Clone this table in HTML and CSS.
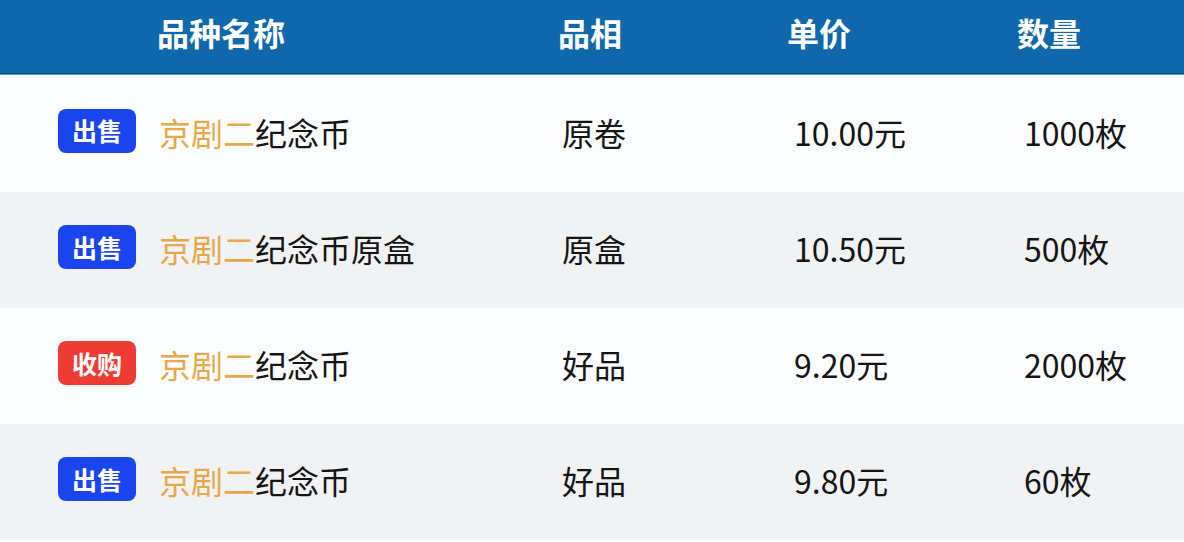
FILE: index.html
```html
<!DOCTYPE html>
<html lang="zh-CN">
<head>
<meta charset="utf-8">
<link rel="stylesheet" href="styles.css">
</head>
<body>
<div class="table">
  <div class="head">
    <div class="h h-name">品种名称</div>
    <div class="h">品相</div>
    <div class="h">单价</div>
    <div class="h">数量</div>
  </div>
  <div class="row odd first">
    <div class="cell name"><span class="badge sell">出售</span><span class="hl">京剧二</span>纪念币</div>
    <div class="cell">原卷</div>
    <div class="cell">10.00元</div>
    <div class="cell">1000枚</div>
  </div>
  <div class="row even">
    <div class="cell name"><span class="badge sell">出售</span><span class="hl">京剧二</span>纪念币原盒</div>
    <div class="cell">原盒</div>
    <div class="cell">10.50元</div>
    <div class="cell">500枚</div>
  </div>
  <div class="row odd">
    <div class="cell name"><span class="badge buy">收购</span><span class="hl">京剧二</span>纪念币</div>
    <div class="cell">好品</div>
    <div class="cell">9.20元</div>
    <div class="cell">2000枚</div>
  </div>
  <div class="row even">
    <div class="cell name"><span class="badge sell">出售</span><span class="hl">京剧二</span>纪念币</div>
    <div class="cell">好品</div>
    <div class="cell">9.80元</div>
    <div class="cell">60枚</div>
  </div>
</div>
</body>
</html>
```
FILE: styles.css
```css
html, body {
  margin: 0;
  padding: 0;
  background: #fcfdff;
}
body {
  font-family: "Noto Sans CJK SC", "Noto Sans", sans-serif;
  width: 1184px;
  height: 542px;
  overflow: hidden;
}
.table {
  display: flex;
  flex-direction: column;
}
.head {
  height: 74px;
  box-sizing: border-box;
  background: #1068ac;
  border-bottom: 1px solid #0d4f86;
  box-shadow: 0 1px 0 #4f9bd6;
  display: grid;
  grid-template-columns: 558px 229px 230px 1fr;
  align-items: center;
  padding-bottom: 10px;
}
.h {
  color: #ffffff;
  font-size: 32px;
  font-weight: 700;
  line-height: 1;
}
.h-name {
  padding-left: 157px;
}
.row {
  height: 116px;
  box-sizing: border-box;
  padding-bottom: 4px;
  display: grid;
  grid-template-columns: 562px 232px 230px 1fr;
  align-items: center;
  color: #141414;
  font-size: 32px;
  line-height: 1;
}
.row.first {
  margin-top: 1px;
  height: 117px;
}
.row.odd { background: #fcfdff; }
.row.even { background: #f1f2f4; }
.name {
  display: flex;
  align-items: center;
  padding-left: 58px;
}
.hl {
  color: #e8a84a;
}
.badge {
  display: inline-flex;
  align-items: center;
  justify-content: center;
  width: 78px;
  height: 44px;
  border-radius: 8px;
  color: #ffffff;
  font-size: 25px;
  font-weight: 700;
  margin-right: 23px;
  margin-top: -2px;
}
.badge.sell { background: #1a45ee; }
.badge.buy { background: #ee3b33; }
```
